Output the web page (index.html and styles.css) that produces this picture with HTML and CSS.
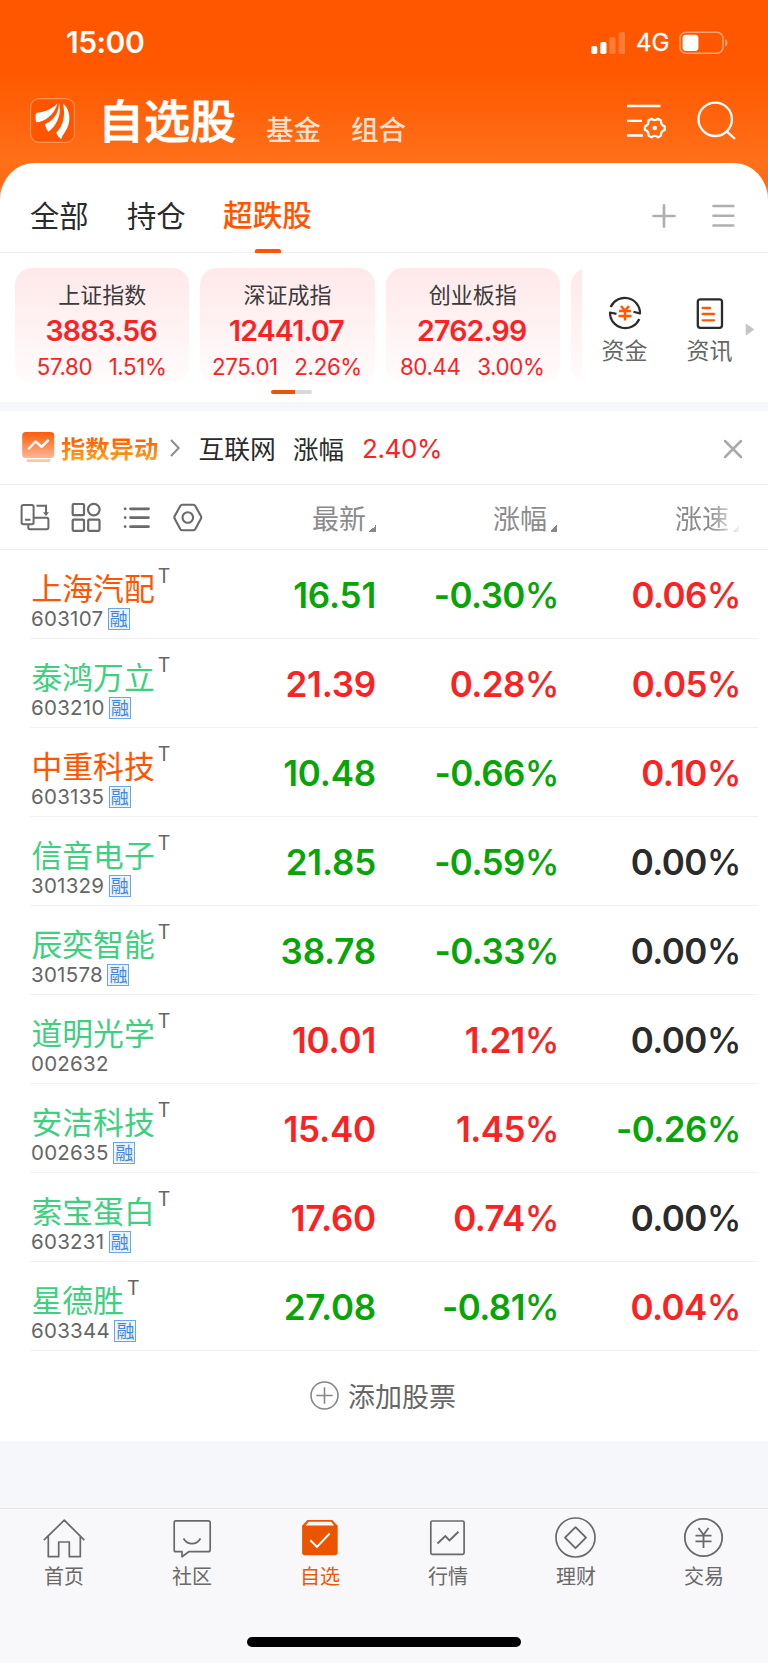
FILE: index.html
```html
<!DOCTYPE html>
<html lang="zh-CN">
<head>
<meta charset="utf-8">
<meta name="viewport" content="width=device-width, initial-scale=1">
<title>自选股</title>
<link rel="stylesheet" href="styles.css">
</head>
<body>
<div class="app">
  <header class="header">
    <div class="status">
      <span class="clock">15:00</span>
      <div class="status-right">
        <svg class="signal" width="35" height="22" viewBox="0 0 35 22" fill="#fff"><rect x="0.3" y="14" width="6" height="8" rx="1.8"/><rect x="9.3" y="10" width="6.2" height="12" rx="1.8"/><rect x="18.3" y="5" width="6.2" height="17" rx="1.8" opacity=".22"/><rect x="27.6" y="0" width="6.4" height="22" rx="1.8" opacity=".22"/></svg>
        <span class="net">4G</span>
        <svg class="battery" width="50" height="24" viewBox="0 0 50 24"><rect x="1" y="1.3" width="43" height="21" rx="6" fill="none" stroke="#fff" stroke-opacity=".45" stroke-width="1.6"/><rect x="3.6" y="3.8" width="15.8" height="16.2" rx="3.4" fill="#fff"/><path d="M46.3 8.2c2.700.8 2.700 6.800 0 7.600z" fill="#fff" fill-opacity=".5"/></svg>
      </div>
    </div>
    <div class="titlebar">
      <svg class="logo" width="45" height="45" viewBox="0 0 45 45"><rect x=".6" y=".6" width="43.800" height="43.800" rx="8.500" fill="#ff5500" stroke="#ff9455" stroke-width="1.100"/><path d="M27.700 5C21.500 12 13.500 14 6.300 14.800 5.200 17.500 5.400 21 6.200 24.300 14 23.800 23.500 18.500 27.700 5z" fill="#fff"/><path d="M29 4.600C29.300 16 22 23.500 15 26.200 15.500 29 16.500 31.500 18.400 33.700 25 29.500 32.500 18 29 4.600z" fill="#fff"/><path d="M33 5.500C36 19 32.500 28.500 26.200 34.700 27.500 37.500 29 39.500 31.200 41.300 32.500 36 37 33.500 39 24.500 40.200 17 38.500 10 33 5.500z" fill="#fff"/></svg>
      <h1 class="title">自选股</h1>
      <span class="subtitle">基金</span>
      <span class="subtitle">组合</span>
      <svg class="filter" width="40" height="36" viewBox="0 0 40 36" fill="none" stroke="#fff" stroke-width="2.300"><path d="M0 3H33.500M0 17.800H15M0 32.500H16"/><path d="M24.500 15.700Q27.700 18.500 31 15.700L34 17.500Q33.600 22 37.700 23.400V26.900Q33.600 28.400 34 32.600L31 34.400Q27.700 31.500 24.500 34.400L21.500 32.600Q22 28.400 17.900 26.900V23.400Q22 22 21.500 17.500Z" stroke-linejoin="round" stroke-width="2.200"/><circle cx="27.800" cy="25" r="2.300" fill="#fff" stroke="none"/></svg>
      <svg class="search" width="40" height="40" viewBox="0 0 40 40" fill="none" stroke="#fff" stroke-width="2.300"><circle cx="18.200" cy="18.300" r="16.700"/><path d="M29.700 30.300L38 38"/></svg>
    </div>
  </header>

  <nav class="groups">
    <span class="group">全部</span>
    <span class="group">持仓</span>
    <span class="group group-on">超跌股</span>
    <svg class="plus" width="24" height="24" viewBox="0 0 24 24" stroke="#b0b0b2" stroke-width="2.700" stroke-linecap="round"><path d="M1.400 12H22.600M12 1.400V22.600"/></svg>
    <svg class="menu" width="23" height="24" viewBox="0 0 23 24" stroke="#b0b0b2" stroke-width="2.500" stroke-linecap="round"><path d="M1.400 2H21.400M1.400 11.800H21.400M1.400 21.500H21.400"/></svg>
  </nav>

  <section class="indices">
    <div class="cards">
      <div class="card"><div class="card-name">上证指数</div><div class="card-value">3883.56</div><div class="card-change"><span>57.80</span><span>1.51%</span></div></div>
      <div class="card"><div class="card-name">深证成指</div><div class="card-value">12441.07</div><div class="card-change"><span>275.01</span><span>2.26%</span></div></div>
      <div class="card"><div class="card-name">创业板指</div><div class="card-value">2762.99</div><div class="card-change"><span>80.44</span><span>3.00%</span></div></div>
      <div class="card"></div>
    </div>
    <div class="shortcut">
      <svg width="34" height="34" viewBox="0 0 34 34" fill="none" stroke="#2b2b2b" stroke-width="2.200"><path d="M2.700 11A15.300 15.300 0 0 1 32 17.500L25.500 15.800M31.300 23A15.300 15.300 0 0 1 2 16.500L8.500 17.800" stroke-linejoin="round"/><path d="M13 10L17 14.800 21 10M11 15H23M10.500 20H23.500M17 15V24.500" stroke="#ff5a00" stroke-width="2.500"/></svg>
      <span>资金</span>
    </div>
    <div class="shortcut">
      <svg width="34" height="34" viewBox="0 0 34 34" fill="none" stroke="#2b2b2b" stroke-width="2.300"><rect x="4.800" y="3.300" width="24.200" height="28.500" rx="2.500"/><path d="M9.600 12H17M9.600 18H21M9.600 24.300H21" stroke="#ff5a00" stroke-width="2.300" stroke-linecap="round"/></svg>
      <span>资讯</span>
    </div>
    <svg class="more" width="10" height="13" viewBox="0 0 10 13"><path d="M1.200 1.200L8.600 6.500 1.200 11.800Z" fill="#c4c4c6" stroke="#c4c4c6" stroke-linejoin="round"/></svg>
    <div class="pager"><i></i></div>
  </section>

  <section class="alert">
    <svg class="alert-icon" width="33" height="31" viewBox="0 0 33 31"><defs><linearGradient id="ag" x1="0" y1="0" x2="0" y2="1"><stop offset="0" stop-color="#ff5c08"/><stop offset="1" stop-color="#ffb795"/></linearGradient></defs><rect x="0.200" y="0" width="32" height="26" rx="3.500" fill="url(#ag)"/><rect x="4.500" y="27.300" width="24" height="2.600" rx="1.300" fill="#ffc4a8"/><path d="M7 16.500L13.500 9.500 19.500 14.800 26 8.500" fill="none" stroke="#fff" stroke-width="2.500" stroke-linecap="round" stroke-linejoin="round"/></svg>
    <span class="alert-title">指数异动</span>
    <svg class="alert-arrow" width="10" height="18" viewBox="0 0 10 18" fill="none" stroke="#8c8c8c" stroke-width="2"><path d="M1 1L8.700 9 1 17"/></svg>
    <span class="alert-name">互联网</span>
    <span class="alert-kind">涨幅</span>
    <span class="alert-value">2.40%</span>
    <svg class="close" width="20" height="20" viewBox="0 0 20 20" stroke="#a9a9ab" stroke-width="2.500" stroke-linecap="round"><path d="M2 2L18 18M18 2L2 18"/></svg>
  </section>

  <div class="thead">
    <div class="tools">
      <svg width="30" height="30" viewBox="0 0 30 30" fill="none" stroke="#6a6a6a" stroke-width="2"><rect x="1.600" y="3" width="12" height="19.300" rx="1.800"/><path d="M5 17.700H10.500M16.500 3.800H26V11.500"/><path d="M23 10.300H29L26 14Z" fill="#6a6a6a" stroke="none"/><path d="M14 15.800H26.700Q28.400 15.800 28.400 17.500V25.500Q28.400 27.200 26.700 27.200H10Q8.300 27.200 8.300 25.500V22.800"/></svg>
      <svg width="30" height="30" viewBox="0 0 30 30" fill="none" stroke="#6a6a6a" stroke-width="2.200"><rect x="1.700" y="2" width="11.300" height="11.200" rx="1"/><circle cx="22.800" cy="7.600" r="5.800"/><rect x="1.700" y="17.600" width="11.300" height="11.200" rx="1"/><rect x="17.200" y="17.600" width="11.300" height="11.200" rx="1"/></svg>
      <svg width="30" height="30" viewBox="0 0 30 30" stroke="#6a6a6a" stroke-width="2.800" stroke-linecap="round"><path d="M8.500 6.800H26.500M8.500 15.600H26.500M8.500 24.600H26.500M3.100 6.800h.1M3.100 15.600h.1M3.100 24.600h.1"/></svg>
      <svg width="30" height="30" viewBox="0 0 30 30" fill="none" stroke="#6a6a6a" stroke-width="2.100"><path d="M9.200 2.800H20.400Q21.600 2.800 22.200 3.800L28 14.200Q28.500 15.400 28 16.600L22.200 27.200Q21.600 28.200 20.400 28.200H9.200Q8 28.200 7.400 27.200L1.600 16.600Q1.100 15.400 1.600 14.200L7.400 3.800Q8 2.800 9.200 2.800Z"/><circle cx="14.800" cy="15.500" r="5.300"/></svg>
    </div>
    <div class="th th-price">最新<i></i></div>
    <div class="th th-change">涨幅<i></i></div>
    <div class="th th-speed">涨速<i></i></div>
  </div>

  <main class="list">
    <div class="row"><div class="stock"><div class="name hot">上海汽配<sup>T</sup></div><div class="code">603107<b>融</b></div></div><div class="num down">16.51</div><div class="num pct down">-0.30<small>%</small></div><div class="num pct up">0.06<small>%</small></div></div>
    <div class="row"><div class="stock"><div class="name">泰鸿万立<sup>T</sup></div><div class="code">603210<b>融</b></div></div><div class="num up">21.39</div><div class="num pct up">0.28<small>%</small></div><div class="num pct up">0.05<small>%</small></div></div>
    <div class="row"><div class="stock"><div class="name hot">中重科技<sup>T</sup></div><div class="code">603135<b>融</b></div></div><div class="num down">10.48</div><div class="num pct down">-0.66<small>%</small></div><div class="num pct up">0.10<small>%</small></div></div>
    <div class="row"><div class="stock"><div class="name">信音电子<sup>T</sup></div><div class="code">301329<b>融</b></div></div><div class="num down">21.85</div><div class="num pct down">-0.59<small>%</small></div><div class="num pct">0.00<small>%</small></div></div>
    <div class="row"><div class="stock"><div class="name">辰奕智能<sup>T</sup></div><div class="code">301578<b>融</b></div></div><div class="num down">38.78</div><div class="num pct down">-0.33<small>%</small></div><div class="num pct">0.00<small>%</small></div></div>
    <div class="row"><div class="stock"><div class="name">道明光学<sup>T</sup></div><div class="code">002632</div></div><div class="num up">10.01</div><div class="num pct up">1.21<small>%</small></div><div class="num pct">0.00<small>%</small></div></div>
    <div class="row"><div class="stock"><div class="name">安洁科技<sup>T</sup></div><div class="code">002635<b>融</b></div></div><div class="num up">15.40</div><div class="num pct up">1.45<small>%</small></div><div class="num pct down">-0.26<small>%</small></div></div>
    <div class="row"><div class="stock"><div class="name">索宝蛋白<sup>T</sup></div><div class="code">603231<b>融</b></div></div><div class="num up">17.60</div><div class="num pct up">0.74<small>%</small></div><div class="num pct">0.00<small>%</small></div></div>
    <div class="row"><div class="stock"><div class="name">星德胜<sup>T</sup></div><div class="code">603344<b>融</b></div></div><div class="num down">27.08</div><div class="num pct down">-0.81<small>%</small></div><div class="num pct up">0.04<small>%</small></div></div>
  </main>

  <div class="add">
    <svg width="29" height="29" viewBox="0 0 29 29" fill="none" stroke="#85858a" stroke-width="1.600"><circle cx="14.500" cy="14.500" r="13.500"/><path d="M6.300 14.500H22.700M14.500 6.300V22.700"/></svg>
    <span>添加股票</span>
  </div>

  <nav class="tabbar">
    <div class="tab"><svg width="42" height="42" viewBox="0 0 42 42" fill="none" stroke="#696969" stroke-width="1.700"><path d="M.8 22.200L21.300 2.200 41.300 22.200M5.300 18.500V38.700H15.700V24H26.300V38.700H37.300V18.500" stroke-linejoin="round"/></svg><span>首页</span></div>
    <div class="tab"><svg width="42" height="42" viewBox="0 0 42 42" fill="none" stroke="#696969" stroke-width="1.700"><path d="M4.700 2.800H37.200Q39.200 2.800 39.200 4.800V31.700Q39.200 33.700 37.200 33.700H17.800L11 38.800V33.700H4.700Q3.200 33.700 3.200 31.700V4.800Q3.200 2.800 4.700 2.800Z" stroke-linejoin="round"/><path d="M12.500 20.500Q15.500 25.600 21 25.600T29.500 20.500"/></svg><span>社区</span></div>
    <div class="tab tab-on"><svg width="42" height="42" viewBox="0 0 42 42"><path d="M8.500 2H33.200L38.700 7.700V34.500Q38.700 37.300 35.900 37.300H5.900Q3.100 37.300 3.100 34.500V7.700Z" fill="#eb5502"/><path d="M9.800 3.800H32L35.200 7.600H6.600Z" fill="#f8f8fa"/><path d="M11.300 22.200L18 28.800 30.700 15.500" fill="none" stroke="#fff" stroke-width="1.900"/></svg><span>自选</span></div>
    <div class="tab"><svg width="42" height="42" viewBox="0 0 42 42" fill="none" stroke="#696969" stroke-width="1.700"><rect x="3.800" y="3" width="33.300" height="33.300" rx="1.500"/><path d="M10.500 25.500L18.300 18 22.500 22.500 31.500 13.700" stroke-width="1.900"/></svg><span>行情</span></div>
    <div class="tab"><svg width="42" height="42" viewBox="0 0 42 42" fill="none" stroke="#696969" stroke-width="1.700"><circle cx="20.500" cy="19.500" r="19.500"/><path d="M20.500 9.200L31 19.700 20.500 30.200 10 19.700Z" stroke-linejoin="round" stroke-width="1.900"/></svg><span>理财</span></div>
    <div class="tab"><svg width="42" height="42" viewBox="0 0 42 42" fill="none" stroke="#696969" stroke-width="1.800"><circle cx="20.500" cy="19.500" r="18.700"/><path d="M15.500 10L20.500 16.800 25.500 10M12.500 17.600H28.500M12.500 23.300H28.500M20.500 16.800V30"/></svg><span>交易</span></div>
  </nav>
  <div class="home"><i></i></div>
</div>
</body>
</html>
```
FILE: styles.css
```css
* { box-sizing: border-box; margin: 0; padding: 0; }

body {
  background: #f6f7fa;
  color: #2b2b2b;
  font-family: "Noto Sans CJK SC", sans-serif;
}

svg { display: block; flex: none; overflow: visible; }

.app {
  width: 768px;
  height: 1663px;
  overflow: hidden;
  display: flex;
  flex-direction: column;
  white-space: nowrap;
}

.app > * { flex: none; }

/* Header */
.header {
  height: 203px;
  margin-bottom: -40px;
  background: linear-gradient(#ff5600 0, #ff5800 72px, #ff7019 163px, #ff6a14 185px, #ffb68c 203px);
  color: #fff;
}

.status {
  height: 84px;
  padding: 1px 39px 0 66px;
  display: flex;
  align-items: center;
  justify-content: space-between;
}

.clock { margin-bottom: 2px; font: 600 30px/80px Inter, sans-serif; letter-spacing: -.5px; }

.status-right { display: flex; align-items: center; }

.net { width: 50px; margin-left: 10px; font: 400 24px/82px Inter, sans-serif; -webkit-text-stroke: .3px #fff; }

.battery { margin-left: -7px; }

.titlebar { height: 79px; display: flex; padding-left: 30px; }

.logo { margin-top: 14px; }

.title { margin: 4px 0 0 23px; width: 138px; font-size: 46px; line-height: 60px; font-weight: 500; -webkit-text-stroke: .8px #fff; }

.subtitle { margin: 24px 0 0 30px; width: 55px; font-size: 27.500px; line-height: 40px; font-weight: 500; opacity: .8; }

.filter { margin: 19px 0 0 auto; }

.search { margin: 17px 31px 0 30px; }

/* Group tabs */
.groups {
  height: 90px;
  padding-left: 30px;
  display: flex;
  background: #fff;
  border-bottom: 1px solid #f0f0f1;
  border-radius: 34px 34px 0 0 / 37px 37px 0 0;
}

.group { width: 59px; margin-right: 38px; font-size: 29.300px; line-height: 102px; height: 90px; }

.group-on {
  width: 89px;
  margin: 0 0 0 -1px;
  font-size: 29.600px;
  font-weight: 500;
  color: #ff5500;
  display: flex;
  flex-direction: column;
  align-items: center;
}

.group-on::after { content: ""; flex: none; width: 26px; height: 4px; margin-top: -16px; background: #ff5500; border-radius: 2px 2px 0 0; }

.plus { margin: 41px 0 0 auto; }

.menu { margin: 41px 33px 0 36px; }

/* Index cards */
.indices {
  height: 149px;
  padding: 15px 0 0 15px;
  display: flex;
  flex-wrap: wrap;
  background: #fff;
}

.cards { width: 567px; height: 115px; display: flex; gap: 11px; overflow: hidden; }

.card {
  flex: none;
  width: 174.300px;
  height: 115px;
  padding-top: 8px;
  border-radius: 17px;
  background: linear-gradient(#ffe8ea, #fffcfc);
  text-align: center;
  color: #fa2323;
}

.card-name { margin-bottom: 1px; font-size: 22px; line-height: 34px; color: #3a3a3a; }

.card-value { font: 600 28.500px/40px Inter, sans-serif; letter-spacing: -.8px; margin-left: -2px; }

.card-change { display: flex; justify-content: center; gap: 16.500px; margin-left: -1px; font: 400 22.300px/32px Inter, sans-serif; letter-spacing: -.35px; }

.shortcut { width: 85px; padding-top: 28px; display: flex; flex-direction: column; align-items: center; font-size: 23px; line-height: 34px; color: #666; }

.shortcut svg { margin-bottom: 2px; }

.more { margin: 55px 0 0 -7px; }

.pager { width: 100%; height: 30px; padding: 7px 0 0 256px; }

.pager i { display: block; width: 41px; height: 4px; border-radius: 2px; background: linear-gradient(90deg, #e95504 24px, #d5d8df 24px); }

/* Alert strip */
.alert {
  height: 74px;
  margin-top: 9px;
  padding-left: 22px;
  display: flex;
  align-items: center;
  background: #fff;
  border-bottom: 1px solid #ececee;
}

.alert > span { line-height: 40px; }

.alert-title {
  width: 98px;
  margin-left: 6px;
  font-size: 24.300px;
  font-weight: 700;
  color: transparent;
  background: linear-gradient(#ff5500 20%, #ffa01c 80%);
  -webkit-background-clip: text;
  background-clip: text;
}

.alert-arrow { margin-left: 11px; }
.alert-name { margin-left: 18.500px; width: 78px; font-size: 25.800px; }
.alert-kind { margin-left: 16.500px; width: 52px; font-size: 25.500px; }
.alert > .alert-value { margin: 3px 0 0 17px; font: 400 26px/40px Inter, sans-serif; letter-spacing: -.4px; color: #fa2323; }
.close { margin: 2px 25px 0 auto; }

/* Table head */
.thead { height: 65px; display: flex; background: #fff; border-bottom: 1px solid #efeff1; padding-left: 20px; }

.tools { width: 194px; display: flex; gap: 21px; padding-top: 17px; }

.th { display: flex; font-size: 27px; line-height: 65px; color: #8b8b8d; }

.th i { width: 7px; height: 7px; margin: 40px 0 0 3px; background: linear-gradient(135deg, transparent 50%, #88888c 50%); }

.th-price { margin-left: 98px; width: 181px; }
.th-change { width: 182px; }
.th-speed { width: 70px; -webkit-mask: linear-gradient(90deg, #000 34px, transparent 68px); mask: linear-gradient(90deg, #000 34px, transparent 68px); }

/* Stock list */
.list { background: #fff; }

.row {
  height: 89px;
  margin: 0 10px 0 30px;
  display: grid;
  grid-template-columns: 163px 183px 183px 182px;
  border-bottom: 1px solid #f3f3f5;
}

.name { display: flex; height: 53px; padding: 15px 0 0 1.500px; font-size: 30.800px; line-height: 43px; color: #3fcf80; }

.name.hot { color: #ff5500; }

.name sup { margin: -5px 0 0 3px; font: 400 19.500px/32px Inter, sans-serif; color: #666; }

.code { display: flex; height: 35px; padding: 4px 0 0 1px; font: 400 20.500px/23px Inter, sans-serif; letter-spacing: .25px; color: #666; }

.code b {
  width: 22px;
  height: 22px;
  margin: .5px 0 0 4.500px;
  border: 1px solid #6aa5ea;
  background: #edf4fd;
  font: 400 18px/18px "Noto Sans CJK SC", sans-serif;
  letter-spacing: 0;
  text-align: center;
  color: #3f86de;
}

.num { text-align: right; font: 600 35px/90px Inter, sans-serif; letter-spacing: -.2px; font-feature-settings: "calt" 0; color: #2b2b2b; }

.pct { letter-spacing: -.6px; }

.pct small { font-size: inherit; font-weight: 500; }

.up { color: #fa2323; }
.down { color: #08a408; }

.add { height: 90px; padding: 0 0 1px 310px; display: flex; align-items: center; background: #fff; font-size: 27px; line-height: 40px; color: #666; }

.add span { margin-left: 9px; }

/* Bottom bar */
.tabbar { height: 129px; margin-top: 67px; padding-top: 9px; display: flex; background: #f8f8fb; border-top: 1px solid #e6e6e9; }

.tab { width: 128px; display: flex; flex-direction: column; align-items: center; font-size: 20px; line-height: 32px; color: #696969; }

.tab-on { color: #f15602; }

.home { height: 27px; display: flex; justify-content: center; background: #f8f8fb; }

.home i { width: 274px; height: 10px; border-radius: 5px; background: #000; }
```
